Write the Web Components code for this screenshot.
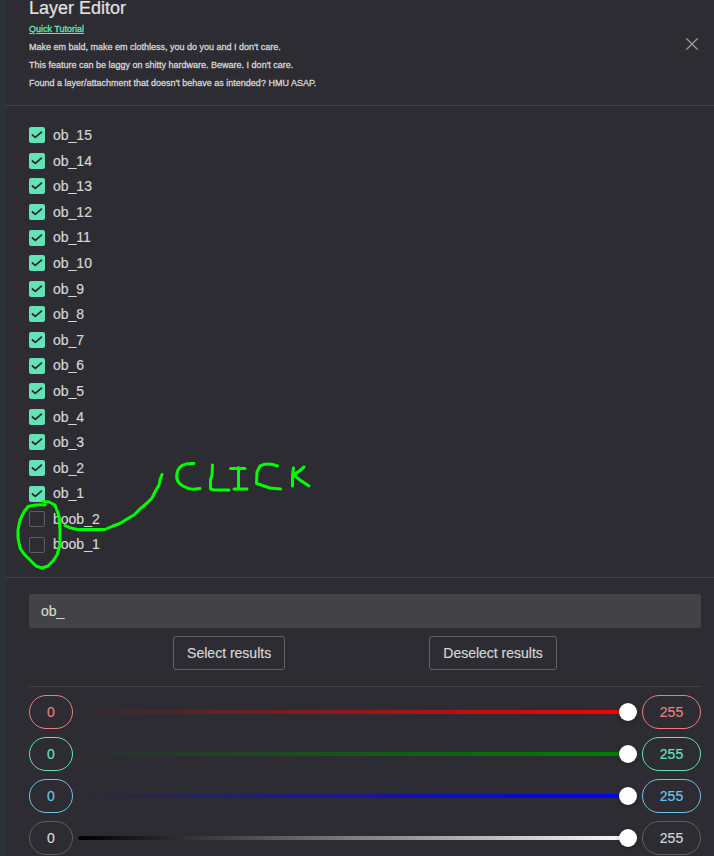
<!DOCTYPE html>
<html lang="en">
<head>
<meta charset="utf-8">
<title>Layer Editor</title>
<style>
html,body{margin:0;height:100%;overflow:hidden}
body{background:#2c3236;font-family:"Liberation Sans",Arial,sans-serif;font-size:14px;color:#d5d5d6;-webkit-text-stroke:.2px currentColor}
</style>
</head>
<body>
<layer-editor></layer-editor>
<script>
const define = (name, markup) => customElements.define(name, class extends HTMLElement {
  connectedCallback() {
    if (this.shadowRoot) return;
    const root = this.attachShadow({ mode: 'open' });
    const t = document.createElement('template');
    t.innerHTML = typeof markup === 'function' ? markup(this) : markup;
    root.append(t.content.cloneNode(true));
  }
});

define('editor-header', `
<style>
:host{display:flex;justify-content:space-between;height:105px;padding:0 16px 0 24px;border-bottom:1px solid #414146;box-sizing:content-box}
h1{margin:0 0 4px;font-size:18px;font-weight:400;line-height:16px;color:#e1e1e2;white-space:nowrap}
div{font-size:9px;line-height:18px;white-space:nowrap;-webkit-text-stroke:.3px currentColor}
a{color:#63e2b7;text-decoration:underline}
svg{display:block;margin-top:38px;width:12px;height:12px}
</style>
<section><h1>Layer Editor</h1>
<div><a>Quick Tutorial</a></div>
<div>Make em bald, make em clothless, you do you and I don't care.</div>
<div>This feature can be laggy on shitty hardware. Beware. I don't care.</div>
<div>Found a layer/attachment that doesn't behave as intended? HMU ASAP.</div></section>
<svg viewBox="0 0 12 12"><path d="M.5 .5 11.5 11.5M11.5 .5 .5 11.5" stroke="#98989b" stroke-width="1.4" fill="none"/></svg>`);

define('layer-check', el => `
<style>
:host{display:flex;align-items:center;gap:8px;height:25.6px;line-height:25.6px}
i{width:16px;height:16px;box-sizing:border-box;border-radius:2px;${el.hasAttribute('checked') ? 'background:#63e2b7' : 'border:1px solid #5d5d62'}}
svg{display:block;width:16px;height:16px}
span{padding-top:1.2px}
</style>
<i>${el.hasAttribute('checked') ? '<svg viewBox="0 0 16 16"><path d="M3.4 8 6.3 10.3 12.4 5.1" fill="none" stroke="#202825" stroke-width="1.7" stroke-linecap="round" stroke-linejoin="round"/></svg>' : ''}</i><span><slot></slot></span>`);

define('search-field', `
<style>:host{display:block;height:34px;line-height:34px;padding-left:12px;border-radius:3px;background:#434347}</style><slot></slot>`);

define('outline-button', `
<style>:host{display:block;box-sizing:border-box;height:34px;line-height:32px;padding:0 13px;border:1px solid #616166;border-radius:3px;text-align:center;white-space:nowrap}</style><slot></slot>`);

define('value-pill', `
<style>:host{display:block;box-sizing:border-box;height:34px;line-height:32px;border:1px solid var(--edge);border-radius:17px;color:var(--ink);text-align:center}</style><slot></slot>`);

define('channel-slider', el => `
<style>
:host{display:grid;grid-template-columns:44px 1fr 59px;gap:5px;align-items:center;height:34px;--ink:${el.getAttribute('ink')};--edge:${el.getAttribute('edge') || el.getAttribute('ink')}}
.rail{height:4px;border-radius:2px;background:linear-gradient(90deg,${el.getAttribute('from')},${el.getAttribute('to')});display:flex;justify-content:flex-end;align-items:center}
.thumb{width:18px;height:18px;flex:none;border-radius:50%;background:#fff;box-shadow:0 1px 4px rgba(0,0,0,.3),inset 0 0 1px rgba(0,0,0,.05)}
</style>
<value-pill>0</value-pill><div class="rail"><div class="thumb"></div></div><value-pill>255</value-pill>`);

define('ink-notes', `
<style>:host{position:absolute;left:10px;top:450px;width:320px;height:130px}svg{display:block}</style>
<svg width="320" height="130" viewBox="10 450 320 130" fill="none" stroke="#0f0" stroke-width="3" stroke-linecap="round" stroke-linejoin="round">
<path d="M45 505C40 504.500 33 505 28 506.500L24 512 20 520 18 530 18 538 20 548 24 554 30 560 36 566 42 568 48 566 53 561 57 555 60 545 60 530 59 516 55 505 49 502 43 501.500"/>
<path d="M65 525.500 69 527.500 77 529.500H105L113 526 120 523.500 127 519 134 515 140 509 147 503 152 498 155 492 159 485 160 480 162 474.500"/>
<path d="M194 463.500C185 463 180 464.500 178 470 175.500 477 177 483 183 486 190 490 194 489.500 200 488.500"/>
<path d="M212.500 465 212 475 210.500 480V489L214 490H229"/>
<path d="M230.500 468.500H245M238.500 467.500V488M234 489H247"/>
<path d="M277.500 466C271 463.500 265 463 260 466L257 472 256.500 483.500 264 486 270 488 280.500 489"/>
<path d="M293.500 468 292.500 476V486M304 467 300 470.500 293.500 475 300 480 309 486"/>
</svg>`);

const layers = Array.from({ length: 15 }, (_, i) => `<layer-check checked>ob_${15 - i}</layer-check>`).join('');
define('layer-editor', `
<style>
:host{display:block;position:relative;box-sizing:border-box;height:856px;overflow:hidden;padding-left:5px}
main{height:856px;background:#2c2c32}
.list{padding:16.4px 24px 0;height:454.6px}
footer{border-top:1px solid #414146;padding:16px 13px 0 24px}
.actions{display:flex;justify-content:space-evenly;height:34px;padding:8px 0 16px}
.channels{display:grid;gap:8px;border-top:1px solid #414146;padding-top:8px}
</style>
<main><editor-header></editor-header>
<div class="list">${layers}<layer-check>boob_2</layer-check><layer-check>boob_1</layer-check></div>
<footer><search-field>ob_</search-field>
<div class="actions"><outline-button>Select results</outline-button><outline-button>Deselect results</outline-button></div>
<div class="channels">
<channel-slider ink="#e88080" from="rgba(255,0,0,0)" to="#f00"></channel-slider>
<channel-slider ink="#63e2b7" from="rgba(0,128,0,0)" to="#008000"></channel-slider>
<channel-slider ink="#70c0e8" from="rgba(0,0,255,0)" to="#00f"></channel-slider>
<channel-slider ink="#d5d5d6" edge="#5d5d62" from="#000" to="#fff"></channel-slider>
</div></footer></main><ink-notes></ink-notes>`);
</script>
</body>
</html>
